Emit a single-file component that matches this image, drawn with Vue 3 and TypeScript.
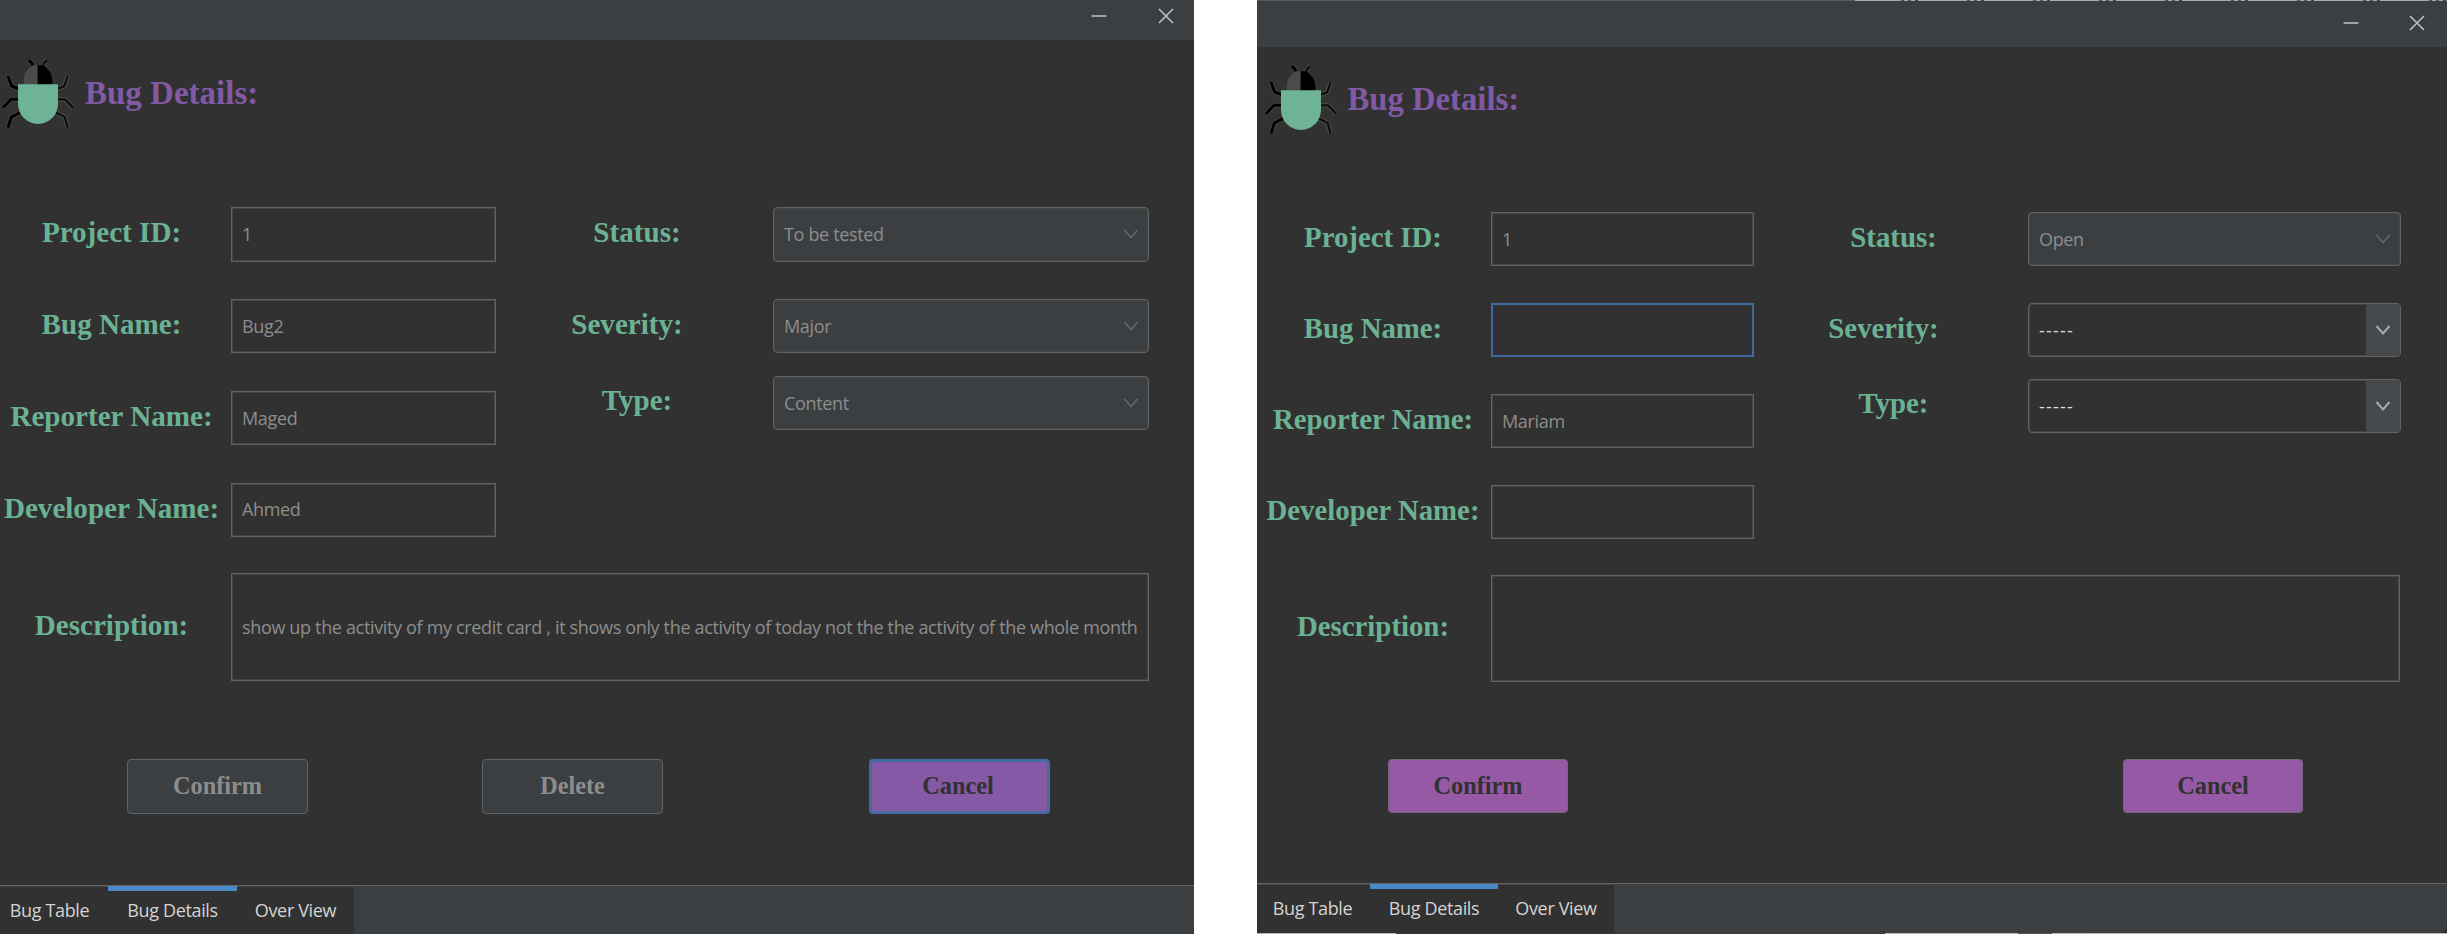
<script setup lang="ts">
interface Field {
  label: string
  value: string
  focused?: boolean
}
interface Choice {
  label: string
  value: string
  enabled?: boolean
}
interface Action {
  label: string
  kind: 'disabled' | 'focused' | 'accent'
}
interface BugWindow {
  id: string
  fields: Field[]
  choices: Choice[]
  description: string
  actions: Action[]
}

const windows: BugWindow[] = [
  {
    id: 'first',
    fields: [
      { label: 'Project ID:', value: '1' },
      { label: 'Bug Name:', value: 'Bug2' },
      { label: 'Reporter Name:', value: 'Maged' },
      { label: 'Developer Name:', value: 'Ahmed' },
    ],
    choices: [
      { label: 'Status:', value: 'To be tested' },
      { label: 'Severity:', value: 'Major' },
      { label: 'Type:', value: 'Content' },
    ],
    description:
      'show up the activity of my credit card , it shows only the activity of today not the the activity of the whole month',
    actions: [
      { label: 'Confirm', kind: 'disabled' },
      { label: 'Delete', kind: 'disabled' },
      { label: 'Cancel', kind: 'focused' },
    ],
  },
  {
    id: 'second',
    fields: [
      { label: 'Project ID:', value: '1' },
      { label: 'Bug Name:', value: '', focused: true },
      { label: 'Reporter Name:', value: 'Mariam' },
      { label: 'Developer Name:', value: '' },
    ],
    choices: [
      { label: 'Status:', value: 'Open' },
      { label: 'Severity:', value: '-----', enabled: true },
      { label: 'Type:', value: '-----', enabled: true },
    ],
    description: '',
    actions: [
      { label: 'Confirm', kind: 'accent' },
      { label: 'Cancel', kind: 'accent' },
    ],
  },
]

const tabs = ['Bug Table', 'Bug Details', 'Over View']
const activeTab = 'Bug Details'
</script>

<template>
  <main class="desktop">
    <section v-for="w in windows" :key="w.id" class="window" :class="w.id">
      <header class="titlebar">
        <svg class="control" viewBox="0 0 16 16"><path d="M0.5 8H15.5" /></svg>
        <svg class="control" viewBox="0 0 16 16"><path d="M1 1L15 15M15 1L1 15" /></svg>
      </header>

      <div class="heading">
        <svg class="bug" viewBox="0 0 270 270">
          <g class="halo">
            <path d="M24 78L35 108L58 117M9 173L33 148H56M24 233L34 201L60 188M86 31Q97 36 99 48" />
            <path d="M203 78L193 108L170 117M219 173L195 148H172M203 233L194 201L168 188M142 31Q131 36 129 48" />
          </g>
          <path class="leg left" d="M24 78L35 108L58 117M9 173L33 148H56M24 233L34 201L60 188M86 31Q97 36 99 48" />
          <path class="leg right" d="M203 78L193 108L170 117M219 173L195 148H172M203 233L194 201L168 188M142 31Q131 36 129 48" />
          <path d="M113 46H99Q71 62 71 92V106H113Z" fill="#4b4b4b" />
          <path d="M113 46H129Q157 64 157 92V106H113Z" fill="#000" />
          <path d="M54 103H174V160C174 200 142 222 114 222C86 222 54 200 54 160Z" fill="#6fb397" />
        </svg>
        <h1>Bug Details:</h1>
      </div>

      <div class="form">
        <div class="fields">
          <div v-for="f in w.fields" :key="f.label" class="row">
            <span class="label">{{ f.label }}</span>
            <div class="box" :class="{ focused: f.focused }">{{ f.value }}</div>
          </div>
        </div>
        <div class="choices">
          <div v-for="c in w.choices" :key="c.label" class="row">
            <span class="label">{{ c.label }}</span>
            <div class="box combo" :class="{ enabled: c.enabled }">
              <span class="value">{{ c.value }}</span>
              <span class="arrow">
                <svg viewBox="0 0 16 10"><path d="M1.5 1L8 8.5L14.5 1" /></svg>
              </span>
            </div>
          </div>
        </div>
      </div>

      <div class="row description">
        <span class="label">Description:</span>
        <div class="box">{{ w.description }}</div>
      </div>

      <div class="actions">
        <button v-for="a in w.actions" :key="a.label" type="button" :class="a.kind">{{ a.label }}</button>
      </div>

      <nav class="tabs">
        <span v-for="t in tabs" :key="t" class="tab" :class="{ active: t === activeTab }">{{ t }}</span>
      </nav>
    </section>
  </main>
</template>

<style>
body {
  margin: 0;
  background: #fff;
}
</style>

<style scoped>
.desktop {
  display: flex;
  gap: 63px;
  width: 2447px;
  height: 934px;
  overflow: hidden;
  background: #fff;
}
.window {
  box-sizing: border-box;
  display: flex;
  flex-direction: column;
  height: 934px;
  background: #313131;
  font-family: "Open Sans", "Noto Sans", sans-serif;
  font-size: 18px;
  letter-spacing: -0.34px;
}
.first {
  width: 1194px;
  --row: 54.6px;
  --row-gap: 37.3px;
  --label: 231px;
  --label-pad: 8px;
  --input: 265px;
  --combo: 376px;
  --choice-label: 277px;
  --body-start: 83px;
  --label-size: 29.1px;
}
.second {
  width: 1190px;
  --row: 54px;
  --row-gap: 37px;
  --label: 234px;
  --label-pad: 2px;
  --input: 263px;
  --combo: 373px;
  --choice-label: 274px;
  --body-start: 81px;
  --label-size: 28.8px;
  padding-bottom: 1px;
  background:
    linear-gradient(90deg, #b4b4b4 139px, #3c3a3a 139px 628px, #b9b5b3 628px 761px, #55504f 761px 795px, #b9b5b3 795px 835px, #b9b9b9 835px) 0 933px / 100% 1px no-repeat,
    #313131;
}
.titlebar {
  flex: none;
  box-sizing: border-box;
  display: flex;
  justify-content: flex-end;
  align-items: flex-start;
  gap: 51px;
  height: 40px;
  padding: 8px 20px 0 0;
  background: #3c3f41;
}
.second .titlebar {
  gap: 50px;
  height: 47px;
  padding: 15px 22px 0 0;
  background:
    linear-gradient(90deg, #5a5a5a 598px, transparent 598px) 0 0 / 100% 1px no-repeat,
    repeating-linear-gradient(90deg, #a9a9a9 0 46px, #555 46px 49px, #aaa 49px 53px, #555 53px 56px, #aaa 56px 60px, #444 60px 63px, #aaa 63px 66px) 598px 0 / 592px 1px no-repeat,
    #3c3f41;
}
.control {
  width: 16px;
  height: 16px;
}
.control path {
  fill: none;
  stroke: #c4c4c4;
  stroke-width: 1.5;
}
.heading {
  flex: none;
  box-sizing: border-box;
  display: flex;
  align-items: flex-start;
  height: 84px;
  padding-top: 10px;
}
.second .heading {
  padding: 9px 0 0 6px;
}
.bug {
  flex: none;
  width: 90px;
  height: 90px;
}
.halo path,
.leg {
  fill: none;
  stroke-width: 13;
}
.halo path {
  stroke: #4e4e4e;
}
.leg {
  stroke: #000;
  stroke-width: 9;
}
.leg.right {
  stroke: #0e0e0e;
  stroke-width: 7;
}
h1 {
  margin: 25px 0 0 -5px;
  color: #8259a5;
  font: bold 33px/36px "Liberation Serif", "Times New Roman", serif;
  letter-spacing: 0;
}
.second h1 {
  margin-left: -5.5px;
  font-size: 32.7px;
}
.form {
  flex: none;
  display: flex;
  padding-top: var(--body-start);
}
.fields,
.choices {
  display: flex;
  flex-direction: column;
  gap: var(--row-gap);
}
.row {
  display: flex;
  height: var(--row);
}
.label {
  flex: none;
  box-sizing: border-box;
  width: var(--label);
  padding: 8px var(--label-pad) 0 0;
  color: #6bb294;
  font: bold var(--label-size)/34px "Liberation Serif", "Times New Roman", serif;
  letter-spacing: 0;
  text-align: center;
}
.box {
  box-sizing: border-box;
  display: flex;
  align-items: center;
  width: var(--input);
  padding: 0 0 1px 10px;
  border: 1px solid #626262;
  box-shadow: inset 0 0 0 1px #454545;
  color: #8d8d8d;
  line-height: 24px;
  white-space: nowrap;
}
.box.focused {
  border: 2px solid #3f6ba0;
  box-shadow: none;
}
.choices .label {
  width: var(--choice-label);
  padding-left: 5px;
  padding-right: 0;
}
.choices .row:nth-child(2) .label {
  padding-left: 0;
  padding-right: 15px;
}
.choices .row:nth-child(3) {
  margin-top: -15px;
}
.choices .row:nth-child(3) .label {
  padding-top: 7px;
}
.box.combo {
  width: var(--combo);
  border-radius: 4px;
  background: #3c3f41;
  overflow: hidden;
}
.value {
  flex: 1;
}
.enabled .value {
  letter-spacing: 1.2px;
}
.arrow {
  display: flex;
  align-items: center;
  justify-content: center;
  width: 34px;
  height: 53px;
}
.arrow svg {
  width: 16px;
  height: 10px;
}
.arrow path {
  fill: none;
  stroke: #656769;
  stroke-width: 1.5;
}
.combo.enabled {
  background: #313131;
  color: #dcdcdc;
}
.combo.enabled .arrow {
  background: #45494b;
}
.combo.enabled .arrow path {
  stroke: #aaa;
  stroke-width: 2;
}
.description {
  flex: none;
  height: 108px;
  margin-top: 36px;
}
.second .description {
  height: 107px;
}
.description .label {
  padding-top: 35px;
}
.second .description .label {
  padding-top: 34px;
}
.description .box {
  width: 918px;
}
.second .description .box {
  width: 909px;
}
.actions {
  flex: none;
  display: flex;
  margin-top: 77.6px;
  padding-left: 127px;
}
.first .actions {
  gap: 174px;
}
.first button:last-child {
  margin-left: 32px;
}
.second .actions {
  gap: 555px;
  margin-top: 77px;
  padding-left: 131px;
}
button {
  box-sizing: border-box;
  width: 181px;
  height: 55px;
  padding: 0 0 1px;
  border: 1px solid #606365;
  border-radius: 4px;
  background: #3c3f41;
  color: #8d8d8d;
  font: bold 24.3px/30px "Liberation Serif", "Times New Roman", serif;
}
.second button {
  width: 180px;
  height: 54px;
}
button.focused {
  padding-right: 3px;
  border: 3px solid #436ca0;
  background: #8559a5;
  color: #313131;
}
button.accent {
  border-color: #76667c;
  background: #9659a5;
  color: #313131;
}
.tabs {
  display: flex;
  flex: none;
  box-sizing: border-box;
  height: 49px;
  margin-top: auto;
  border-top: 1px solid #646464;
  background: #3c3f41;
}
.second .tabs {
  height: 50px;
  border-radius: 0 0 8px 8px;
  overflow: hidden;
}
.tab {
  box-sizing: border-box;
  width: 117px;
  padding-top: 11px;
  border-top: 1px solid #454545;
  background: #313131;
  color: #d4d4d4;
  line-height: 24px;
  text-align: center;
}
.tab:first-child {
  width: 108px;
  padding-right: 9px;
}
.tab.active {
  width: 129px;
  padding-top: 7px;
  border-top: 5px solid #4a88c7;
}
.second .tab:first-child {
  width: 113px;
  padding-right: 2px;
}
.second .tab.active {
  width: 128px;
}
.second .tab:last-child {
  width: 116px;
}
</style>
